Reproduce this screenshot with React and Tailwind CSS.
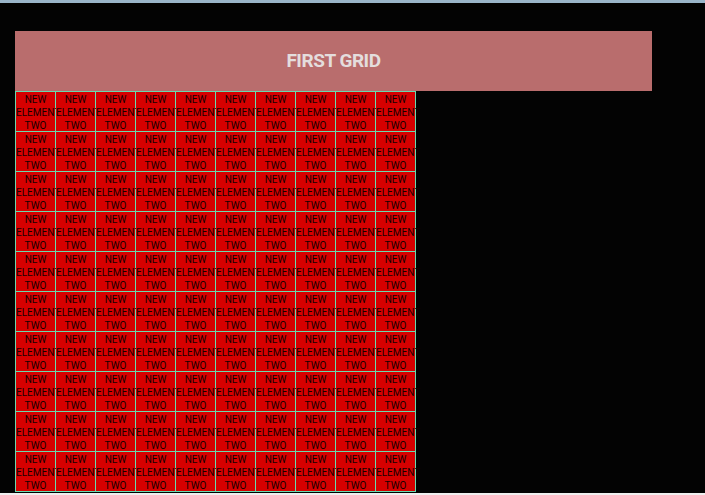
import React from 'react';

const cells = Array.from({ length: 100 }, (_, i) => i);

const App = () => {
    return (
        <div className="min-h-[495px] bg-[#efefef] font-['Roboto',sans-serif]">
            <div className="h-[3px] bg-[#9ab5c9]" />
            <div className="h-[490px] bg-[#030303] pt-7 pl-[15px]">
                <div className="w-[637px] h-[60px] bg-[#b96d6d] flex items-center justify-center">
                    <h1 className="text-[19px] font-bold text-[#e4dddd] tracking-tight">FIRST GRID</h1>
                </div>
                <div className="grid grid-cols-[repeat(10,39px)] gap-px p-px bg-[#6ad8ae] w-fit">
                    {cells.map((i) => (
                        <div
                            key={i}
                            className="h-[39px] pt-px bg-[#d60000] text-center text-[10px] leading-[13px] text-[#140000] whitespace-nowrap"
                        >
                            <div>NEW</div>
                            <div>ELEMENT</div>
                            <div>TWO</div>
                        </div>
                    ))}
                </div>
            </div>
        </div>
    );
};

export default App;
